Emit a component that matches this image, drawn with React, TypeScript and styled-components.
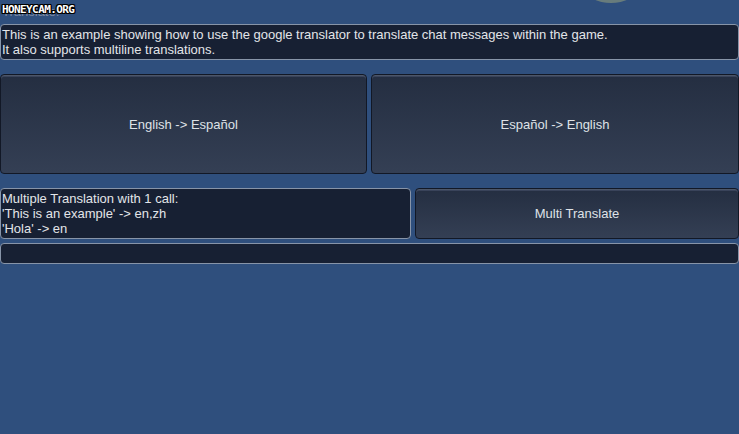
import { createGlobalStyle, styled } from "styled-components";

const GlobalStyle = createGlobalStyle`
  html, body {
    margin: 0;
    padding: 0;
    background: #2f4f7d;
    font-family: "Liberation Sans", Arial, sans-serif;
  }
  #root {
    min-height: 434px;
  }
`;

export default function App(): JSX.Element {
  return (
    <>
      <GlobalStyle />
      <Page>
        <Header>
          <Label>Translate:</Label>
          <Watermark>HONEYCAM.ORG</Watermark>
          <Knob />
        </Header>
        <TextBox>
          This is an example showing how to use the google translator to translate chat messages within the game.
          <br />
          It also supports multiline translations.
        </TextBox>
        <ButtonRow>
          <Button $height={100}>English -&gt; Español</Button>
          <Button $height={100}>Español -&gt; English</Button>
        </ButtonRow>
        <MultiRow>
          <TextBox>
            Multiple Translation with 1 call:
            <br />
            'This is an example' -&gt; en,zh
            <br />
            'Hola' -&gt; en
          </TextBox>
          <Button $height={51}>Multi Translate</Button>
        </MultiRow>
        <EmptyBox />
      </Page>
    </>
  );
}

const Page = styled.div`
  display: flex;
  flex-direction: column;
  width: 739px;
  height: 434px;
  overflow: hidden;
`;

const Header = styled.div`
  position: relative;
  height: 24px;
`;

const Label = styled.div`
  padding: 4px 0 0 2px;
  font-size: 13px;
  color: #7f8ba0;
`;

// watermark sits on top of the label, as in the capture
const Watermark = styled.div`
  position: absolute;
  left: 2px;
  top: 3px;
  font-family: "DejaVu Sans Mono", monospace;
  font-size: 11px;
  font-weight: bold;
  letter-spacing: -0.6px;
  color: #ffffff;
  text-shadow: 1px 0 0 #000, -1px 0 0 #000, 0 1px 0 #000, 0 -1px 0 #000,
    1px 1px 0 #000, -1px -1px 0 #000, 1px -1px 0 #000, -1px 1px 0 #000;
`;

const Knob = styled.div`
  position: absolute;
  left: 586px;
  top: -24px;
  width: 50px;
  height: 27px;
  border-radius: 50%;
  background: #687c7c;
`;

const TextBox = styled.div`
  box-sizing: border-box;
  min-height: 36px;
  padding: 2px 1px;
  background: #172033;
  border: 1px solid #8794a8;
  border-radius: 4px;
  color: #e3e5e9;
  font-size: 13px;
  line-height: 15px;
`;

const ButtonRow = styled.div`
  display: grid;
  grid-template-columns: 367px 1fr;
  gap: 4px;
  margin-top: 14px;
`;

const Button = styled.div<{ $height: number }>`
  box-sizing: border-box;
  height: ${(p) => p.$height}px;
  display: flex;
  align-items: center;
  justify-content: center;
  background: linear-gradient(#242e41, #343f54);
  border: 1px solid #121826;
  border-radius: 4px;
  box-shadow: inset 0 1px 0 #4c5668, inset 0 2px 0 #39435a;
  color: #dfe2e7;
  font-size: 13px;
`;

const MultiRow = styled.div`
  display: grid;
  grid-template-columns: 411px 1fr;
  gap: 4px;
  margin-top: 14px;

  ${TextBox} {
    height: 51px;
  }
`;

const EmptyBox = styled(TextBox)`
  min-height: 0;
  height: 21px;
  margin-top: 4px;
`;
